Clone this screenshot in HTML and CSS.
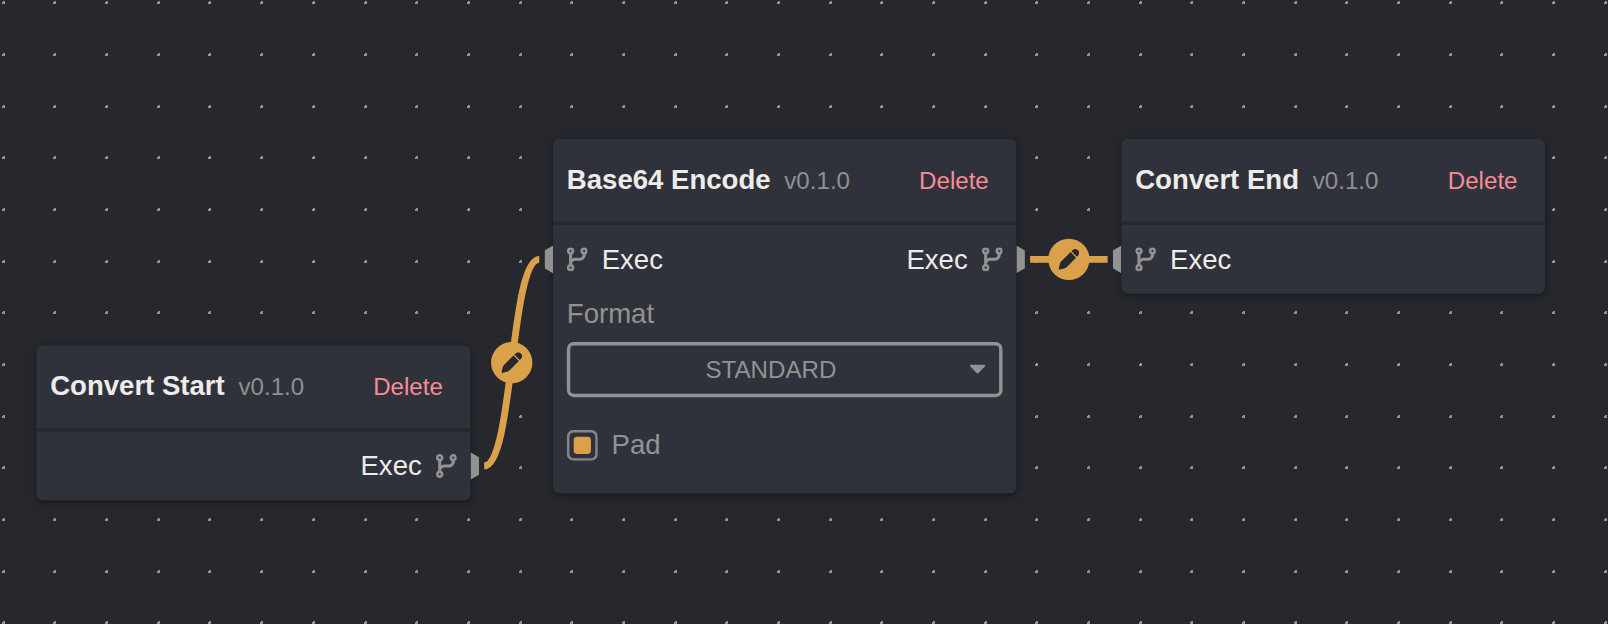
FILE: index.html
```html
<!DOCTYPE html>
<html lang="en">
<head>
<meta charset="utf-8">
<title>Graph editor</title>
<link rel="stylesheet" href="styles.css">
</head>
<body>
<svg class="defs" width="0" height="0" aria-hidden="true">
  <symbol id="branch" viewBox="0 0 448 512"><path d="M80 104a24 24 0 1 0 0-48 24 24 0 1 0 0 48zm80-24c0 32.800-19.700 61-48 73.300v87.800c18.800-10.900 40.700-17.100 64-17.100h96c35.300 0 64-28.700 64-64v-6.700C307.700 141 288 112.800 288 80c0-44.200 35.800-80 80-80s80 35.800 80 80c0 32.800-19.700 61-48 73.300v6.700c0 70.700-57.300 128-128 128h-96c-35.300 0-64 28.700-64 64v6.700c28.300 12.300 48 40.500 48 73.300 0 44.200-35.800 80-80 80s-80-35.800-80-80c0-32.800 19.700-61 48-73.300V153.300C19.700 141 0 112.800 0 80 0 35.800 35.800 0 80 0s80 35.800 80 80zm232 0a24 24 0 1 0-48 0 24 24 0 1 0 48 0zM80 456a24 24 0 1 0 0-48 24 24 0 1 0 0 48z"/></symbol>
  <symbol id="pen" viewBox="0 0 12 12"><path d="M7 1.800 10.200 5 4.800 10.400Q4.200 10.900 3.500 11.100L.5 12Q0 12.100.1 11.500L.8 8.700Q1 7.900 1.500 7.300ZM7.500 1.300 8.300.6Q9.900-.7 11.300.7 12.700 2.100 11.400 3.700L10.700 4.500Z"/></symbol>
</svg>
<main class="canvas">
  <svg class="dots" id="dots" aria-hidden="true"><path id="dots-path"/></svg>
  <div class="viewport">
    <svg class="wires" width="900" height="260" aria-hidden="true">
      <path d="M260 190C277 190 275 70 292 70"/>
      <path d="M577 70H622"/>
    </svg>

    <section class="node node-start">
      <header class="node-header"><h2>Convert Start</h2><span class="version">v0.1.0</span><button class="delete">Delete</button></header>
      <div class="row"><div class="port out"><span>Exec</span><svg class="icon"><use href="#branch"/></svg></div></div>
    </section>

    <section class="node node-encode">
      <header class="node-header"><h2>Base64 Encode</h2><span class="version">v0.1.0</span><button class="delete">Delete</button></header>
      <div class="row">
        <div class="port in"><svg class="icon"><use href="#branch"/></svg><span>Exec</span></div>
        <div class="port out"><span>Exec</span><svg class="icon"><use href="#branch"/></svg></div>
      </div>
      <div class="fields">
        <div class="label">Format</div>
        <div class="select"><span>STANDARD</span><svg class="caret" viewBox="0 0 9 6"><path d="M.6 0H8.400Q9.300.3 8.800 1.100L5.100 5Q4.500 5.500 3.900 5L.2 1.100Q-.3.3.6 0Z"/></svg></div>
        <div class="check"><span class="box"></span><span>Pad</span></div>
      </div>
    </section>

    <section class="node node-end">
      <header class="node-header"><h2>Convert End</h2><span class="version">v0.1.0</span><button class="delete">Delete</button></header>
      <div class="row"><div class="port in"><svg class="icon"><use href="#branch"/></svg><span>Exec</span></div></div>
    </section>

    <button class="edit edit-a" aria-label="Edit connection"><svg><use href="#pen"/></svg></button>
    <button class="edit edit-b" aria-label="Edit connection"><svg><use href="#pen"/></svg></button>
  </div>
</main>
<script src="grid.js"></script>
</body>
</html>
```
FILE: styles.css
```css
* { box-sizing: border-box; }

body {
  margin: 0;
  background: #27282d;
  color: #efebe8;
  font-family: "Liberation Sans", Arial, sans-serif;
  font-size: 16px;
}

button { font: inherit; border: 0; padding: 0; background: none; }

.defs { position: absolute; }

.canvas {
  position: relative;
  width: 1608px;
  height: 624px;
  overflow: hidden;
}

.dots {
  position: absolute;
  inset: 0;
  width: 100%;
  height: 100%;
  fill: #929292;
  shape-rendering: crispEdges;
}

.viewport {
  position: absolute;
  left: 0;
  top: 0;
  transform-origin: 0 0;
  transform: translate(36.4px, 138.8px) scale(1.7222);
}

.wires {
  position: absolute;
  left: 0;
  top: 0;
  fill: none;
  stroke: #dba14a;
  stroke-width: 4;
}

.node {
  position: absolute;
  background: #30323b;
  border-radius: 4px;
  box-shadow: 0 1px 4px rgba(0, 0, 0, .4);
}
.node-start { left: 0; top: 120px; width: 252px; }
.node-encode { left: 300px; top: 0; width: 269px; height: 206px; }
.node-end { left: 630px; top: 0; width: 246px; }

.node-header {
  display: flex;
  align-items: center;
  gap: 8px;
  height: 50px;
  padding: 0 16px 0 8px;
  border-bottom: 2px solid #27282d;
  white-space: nowrap;
}
.node-header h2 { margin: 0; font-size: 16px; font-weight: 700; line-height: 24px; }
.version { color: #8f8f8f; font-size: 14px; }
.delete { margin-left: auto; color: #fb8b95; font-size: 14px; }

.row { display: flex; height: 40px; }
.port {
  position: relative;
  display: flex;
  align-items: center;
  gap: 8px;
  padding: 0 8px;
}
.port span { transform: translateY(.4px); }
.port.out { margin-left: auto; }
.port::after {
  content: "";
  position: absolute;
  top: 12px;
  width: 5px;
  height: 16px;
  background: #929292;
}
.port.in::after { left: -5px; clip-path: polygon(100% 0, 0 18%, 0 82%, 100% 100%); }
.port.out::after { right: -5px; clip-path: polygon(0 0, 100% 18%, 100% 82%, 0 100%); }
.icon { width: 12.25px; height: 14px; fill: #929292; }

.fields { padding: 0 8px; color: #929292; }
.label { height: 28px; line-height: 24px; }
.select {
  display: flex;
  align-items: center;
  height: 32px;
  padding: 0 8px 0 1px;
  border: 2px solid #929292;
  border-radius: 4px;
  font-size: 14px;
}
.select span { flex: 1; text-align: center; }
.caret { width: 9px; height: 6px; fill: #929292; }
.check { display: flex; align-items: center; gap: 8px; height: 18px; margin-top: 19px; }
.box {
  width: 18px;
  height: 18px;
  padding: 4px;
  box-shadow: inset 0 0 0 1.500px #858585;
  border-radius: 4px;
}
.box::before {
  content: "";
  display: block;
  height: 100%;
  border-radius: 2px;
  background: #dba14a;
}

.edit {
  position: absolute;
  display: grid;
  place-items: center;
  width: 24px;
  height: 24px;
  border-radius: 50%;
  background: #dba14a;
}
.edit svg { width: 12px; height: 12px; fill: #27282d; overflow: visible; }
.edit-a { left: 264px; top: 118px; }
.edit-b { left: 587px; top: 58px; transform: translateX(.5px); }
```
FILE: grid.js
```javascript
// Background grid: one small pixel-aligned mark per grid step.
const step = 51.68;
let d = "";
for (let y = 1.2; y < 624; y += step) {
  for (let x = 1.75; x < 1608; x += step) {
    d += `M${Math.round(x) + 1} ${Math.round(y)}h2v3h-3v-2h1z`;
  }
}
document.getElementById("dots-path").setAttribute("d", d);
```
